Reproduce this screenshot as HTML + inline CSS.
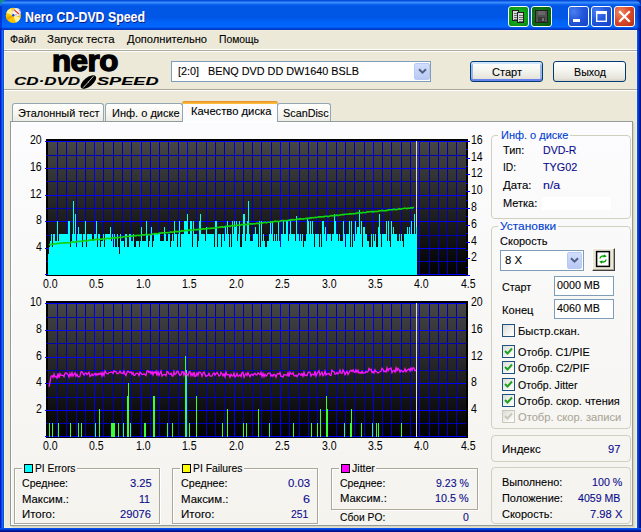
<!DOCTYPE html><html><head><meta charset="utf-8"><title>Nero CD-DVD Speed</title><style>
*{box-sizing:border-box;margin:0;padding:0}
html,body{width:641px;height:532px;overflow:hidden;background:#ECE9D8;}
body{position:relative;font-family:"Liberation Sans",sans-serif;font-size:11px;color:#000;}
.a{position:absolute;white-space:nowrap;}
.t{position:absolute;white-space:nowrap;line-height:14px;height:14px;font-size:11px;transform-origin:0 50%;-webkit-text-stroke:0.1px currentColor;}
.b{color:#0A0A8C;}
.g{color:#0040D0;}
.d{color:#ACA899;}
.title{left:0;top:0;width:641px;height:30px;background:linear-gradient(180deg,#0046D8 0,#0A52E0 1px,#338AFC 2px,#3B8EFF 3px,#1468F0 4px,#0057E6 6px,#0055E5 17px,#0060F4 21px,#0066FF 25px,#0066FF 27px,#0050E0 28px,#003CCC 29px,#0034C0 30px);border-radius:7px 7px 0 0;}
.cap{width:21px;height:21px;top:6px;border:1px solid #fff;border-radius:3px;background:radial-gradient(circle at 25% 25%,#4A80F0 0%,#2458DC 45%,#1440C4 100%);}
.capx{background:radial-gradient(circle at 28% 28%,#EE8C68 0%,#DE4C2A 45%,#B42E16 100%);}
.capg{background:radial-gradient(circle at 45% 45%,#20B828 0%,#10A018 60%,#088010 100%);border-color:#F0FFF0;}
.grp{border:1px solid #D0D0BF;border-radius:4px;}
.egr{border:1px solid #ACA899;box-shadow:1px 1px 0 #fff, inset 1px 1px 0 #fff;}
.btn{border:1px solid #003C74;border-radius:3px;background:linear-gradient(180deg,#FFFFFF 0%,#F3F3EE 50%,#E6E5DC 85%,#D6D0C5 100%);}
.inp{border:1px solid #7F9DB9;background:#fff;}
.cb{width:13px;height:13px;border:1px solid #1C5180;background:linear-gradient(135deg,#DCDCD7 0%,#F3F3F0 60%,#FFFFFF 100%);}
.tab{border:1px solid #91A7B4;border-bottom:none;border-radius:3px 3px 0 0;background:linear-gradient(180deg,#FFFFFF 0%,#F6F5EE 60%,#ECEBE6 100%);}
.ax{font-size:12px;-webkit-text-stroke:0;}
</style></head><body>
<div class="a" style="left:0;top:0;width:8px;height:8px;background:#178A8A"></div><div class="a" style="left:633px;top:0;width:8px;height:8px;background:#0A2FA8"></div>
<div class="a title"></div>
<div class="a" style="left:637px;top:6px;width:4px;height:24px;background:linear-gradient(90deg,rgba(0,40,180,0.25) 0,rgba(0,20,150,0.6) 50%,rgba(0,10,130,0.85) 100%)"></div>
<div class="a" style="left:0;top:6px;width:2px;height:24px;background:rgba(0,20,190,0.55)"></div>
<div class="a" style="left:4px;top:30px;width:633px;height:498px;border:1px solid #F6F0DA;border-top-color:#F3EEDC"></div>
<div class="a" style="left:0;top:30px;width:4px;height:502px;background:linear-gradient(90deg,#0019CF 0,#0019CF 1px,#0A48E4 1px,#0A48E4 2px,#166AEE 2px,#166AEE 3px,#0855DD 3px)"></div>
<div class="a" style="left:637px;top:30px;width:4px;height:502px;background:linear-gradient(90deg,#0A50E8 0,#0A50E8 1px,#0040D8 1px,#0040D8 2px,#001EA0 2px,#001EA0 3px,#00138C 3px)"></div>
<div class="a" style="left:0;top:528px;width:641px;height:4px;background:linear-gradient(180deg,#0A50E8 0,#0A50E8 1px,#0040D8 1px,#0040D8 2px,#001EA0 2px,#001EA0 3px,#00138C 3px)"></div>
<svg class="a" style="left:5px;top:7px" width="17" height="17" viewBox="0 0 17 17"><circle cx="8.4" cy="8.4" r="7.6" fill="#FFC400"/><path d="M8.4 8.4L1.2 6A7.6 7.6 0 0 1 6 1.2Z" fill="#FFEE90"/><path d="M8.4 8.4L15.6 10.8A7.6 7.6 0 0 1 10.8 15.6Z" fill="#FFF3A0"/><path d="M8.4 8.4L3 13.8A7.6 7.6 0 0 1 1 10Z" fill="#E8A800"/><circle cx="11.4" cy="5.2" r="4.3" fill="#E4E4E8"/><circle cx="11.4" cy="5.2" r="3" fill="#F8F8FA"/><path d="M8.8 2.6L14 7" stroke="#E83010" stroke-width="1.2"/><circle cx="11" cy="7.6" r="0.7" fill="#F05030"/><circle cx="14.3" cy="3.6" r="0.6" fill="#F07050"/><circle cx="8.3" cy="8.3" r="1.2" fill="#1050D8"/></svg>
<div class="t " id="t1" style="left:25px;top:11px;font-size:14px;transform:scaleX(0.8814);font-weight:bold;color:#fff;text-shadow:1px 1px #0A1883;line-height:16px;height:16px;margin-top:-2px">Nero CD-DVD Speed</div>
<div class="a cap capg" style="left:508px"><svg width="19" height="19" viewBox="0 0 19 19" shape-rendering="crispEdges"><rect x="3.5" y="3.5" width="6" height="10" fill="#D8D8D8" stroke="#202020" stroke-width="1"/><path d="M5 6h3M5 8h3M5 10h3M5 12h3" stroke="#707070" stroke-width="1"/><rect x="8.5" y="5.5" width="6" height="10" fill="#D8D8D8" stroke="#202020" stroke-width="1"/><path d="M10 8.5h4M10 10.5h4M10 12.5h4M10 14.5h4" stroke="#707070" stroke-width="1"/></svg></div>
<div class="a cap capg" style="left:531px;background:radial-gradient(circle at 40% 40%,#188A18 0%,#0A6A10 60%,#065008 100%)"><svg width="19" height="19" viewBox="0 0 19 19"><rect x="3.5" y="3.5" width="12" height="12" fill="#505050" stroke="#202020" stroke-width="1"/><rect x="6" y="4" width="7" height="4" fill="#686868"/><rect x="6" y="10" width="7" height="5" fill="#383838"/><rect x="10" y="11" width="2" height="3" fill="#707070"/></svg></div>
<div class="a cap" style="left:568px"><svg width="19" height="19" viewBox="0 0 19 19"><rect x="4" y="12" width="7" height="3" fill="#fff"/></svg></div>
<div class="a cap" style="left:591px"><svg width="19" height="19" viewBox="0 0 19 19"><rect x="4.7" y="5.5" width="9.6" height="8.8" fill="none" stroke="#fff" stroke-width="1.4"/><rect x="4" y="4" width="11" height="3" fill="#fff"/></svg></div>
<div class="a cap capx" style="left:614px"><svg width="19" height="19" viewBox="0 0 19 19"><path d="M5 5L14 14M14 5L5 14" stroke="#fff" stroke-width="2.2" stroke-linecap="square"/></svg></div>
<div class="t " id="t2" style="left:9.5px;top:32px;transform:scaleX(0.9613);">Файл</div>
<div class="t " id="t3" style="left:47px;top:32px;transform:scaleX(1.0380);">Запуск теста</div>
<div class="t " id="t4" style="left:126.5px;top:32px;transform:scaleX(1.0105);">Дополнительно</div>
<div class="t " id="t5" style="left:218.5px;top:32px;transform:scaleX(0.9412);">Помощь</div>
<div class="a" style="left:4px;top:49px;width:633px;height:3px;background:#fff"></div>
<div class="a" style="left:4px;top:50px;width:633px;height:1px;background:#ACA899"></div>
<div class="a" style="left:4px;top:89px;width:633px;height:1px;background:#ACA899"></div>
<div class="a" style="left:4px;top:90px;width:633px;height:1px;background:#fff"></div>
<div class="t " id="t6" style="left:51.9px;top:59.1px;font-size:30px;transform:scaleX(1.0442);font-weight:bold;letter-spacing:-0.5px;line-height:34px;height:34px;margin-top:-15.5px;-webkit-text-stroke:1.4px #000">nero</div>
<div class="t " id="t7" style="left:14px;top:74.7px;font-size:10px;transform:scaleX(1.6971);font-style:italic;font-weight:bold;">CD·DVD</div>
<div class="t " id="t8" style="left:97px;top:74.7px;font-size:10px;transform:scaleX(1.8138);font-style:italic;font-weight:bold;">SPEED</div>
<svg class="a" style="left:79px;top:73px" width="19" height="18" viewBox="0 0 19 18"><g transform="translate(9.4 9) rotate(-39)"><ellipse cx="0" cy="0" rx="9.3" ry="4.5" fill="#000"/><path d="M-7.5 1.1L-1.2 0.2M1.2 -0.2L7.5 -1.3" stroke="#ECE9D8" stroke-width="0.8" fill="none"/><ellipse cx="0" cy="0" rx="1.1" ry="0.6" fill="#D8D5C4"/></g></svg>
<div class="a inp" style="left:171px;top:61px;width:260px;height:21px"></div>
<div class="t " id="t9" style="left:178px;top:64.4px;transform:scaleX(0.9836);">[2:0]&nbsp;&nbsp; BENQ DVD DD DW1640 BSLB</div>
<div class="a" style="left:414px;top:63px;width:16px;height:17px;border:1px solid #B7CAF5;border-radius:2px;background:linear-gradient(180deg,#D2DEFC 0,#C6D3F7 50%,#B9C9F4 100%)"><svg class="a" style="left:0.5px;top:0" width="13" height="15" viewBox="0 0 13 15"><path d="M3 5.2L6.5 8.7L10 5.2" stroke="#4D6185" stroke-width="2" fill="none"/></svg></div>
<div class="a btn" style="left:470px;top:61px;width:73px;height:21px;box-shadow:inset 0 2px 0 #CEE7FF,inset 0 -2px 0 #6982EE,inset 2px 0 0 #98B8EA,inset -2px 0 0 #98B8EA"></div>
<div class="a btn" style="left:553px;top:61px;width:73px;height:21px"></div>
<div class="t " id="t10" style="left:491.5px;top:64.5px;transform:scaleX(1.0037);">Старт</div>
<div class="t " id="t11" style="left:573.5px;top:64.5px;transform:scaleX(0.9720);">Выход</div>
<div class="a" style="left:10px;top:121px;width:623px;height:405px;border:1px solid #919B9C;box-shadow:inset 1px 1px 0 #fff,1px 1px 0 #D9D5C0,2px 2px 0 #E3E0CC;background:linear-gradient(180deg,#FCFCFE 0,#F4F3EE 100%)"></div>
<div class="a tab" style="left:12px;top:103px;width:92px;height:18px"></div>
<div class="a tab" style="left:105px;top:103px;width:78px;height:18px"></div>
<div class="a tab" style="left:277px;top:103px;width:54px;height:18px"></div>
<div class="a tab" style="left:182px;top:101px;width:96px;height:21px;background:#FCFCFE;border-top:none"><div class="a" style="left:-1px;top:0;width:96px;height:3px;background:linear-gradient(180deg,#E68B2C 0,#FFC73C 100%);border-radius:3px 3px 0 0"></div></div>
<div class="t " id="t12" style="left:17.5px;top:105.8px;transform:scaleX(0.9898);">Эталонный тест</div>
<div class="t " id="t13" style="left:111.5px;top:105.8px;transform:scaleX(1.0024);">Инф. о диске</div>
<div class="t " id="t14" style="left:190.5px;top:103.8px;transform:scaleX(1.0201);">Качество диска</div>
<div class="t " id="t15" style="left:282.5px;top:105.8px;transform:scaleX(0.9835);">ScanDisc</div>
<svg class="a" style="left:0;top:0" width="641" height="532" viewBox="0 0 641 532" shape-rendering="crispEdges"><defs><linearGradient id="bg" x1="0" y1="0" x2="0" y2="1"><stop offset="0" stop-color="#464646"/><stop offset="1" stop-color="#000"/></linearGradient></defs><rect x="46" y="139" width="422" height="137" fill="#000"/><rect x="48" y="141" width="418" height="134" fill="url(#bg)"/><rect x="46" y="301" width="422" height="137" fill="#000"/><rect x="48" y="303" width="418" height="134" fill="url(#bg)"/><rect x="57" y="141" width="1" height="134" fill="#0000B4"/><rect x="66" y="141" width="1" height="134" fill="#0000B4"/><rect x="76" y="141" width="1" height="134" fill="#0000B4"/><rect x="85" y="141" width="1" height="134" fill="#0000B4"/><rect x="94" y="141" width="1" height="134" fill="#0000F0"/><rect x="103" y="141" width="1" height="134" fill="#0000B4"/><rect x="113" y="141" width="1" height="134" fill="#0000B4"/><rect x="122" y="141" width="1" height="134" fill="#0000B4"/><rect x="131" y="141" width="1" height="134" fill="#0000B4"/><rect x="141" y="141" width="1" height="134" fill="#0000F0"/><rect x="150" y="141" width="1" height="134" fill="#0000B4"/><rect x="159" y="141" width="1" height="134" fill="#0000B4"/><rect x="168" y="141" width="1" height="134" fill="#0000B4"/><rect x="178" y="141" width="1" height="134" fill="#0000B4"/><rect x="187" y="141" width="1" height="134" fill="#0000F0"/><rect x="196" y="141" width="1" height="134" fill="#0000B4"/><rect x="206" y="141" width="1" height="134" fill="#0000B4"/><rect x="215" y="141" width="1" height="134" fill="#0000B4"/><rect x="224" y="141" width="1" height="134" fill="#0000B4"/><rect x="234" y="141" width="1" height="134" fill="#0000F0"/><rect x="243" y="141" width="1" height="134" fill="#0000B4"/><rect x="252" y="141" width="1" height="134" fill="#0000B4"/><rect x="261" y="141" width="1" height="134" fill="#0000B4"/><rect x="271" y="141" width="1" height="134" fill="#0000B4"/><rect x="280" y="141" width="1" height="134" fill="#0000F0"/><rect x="289" y="141" width="1" height="134" fill="#0000B4"/><rect x="299" y="141" width="1" height="134" fill="#0000B4"/><rect x="308" y="141" width="1" height="134" fill="#0000B4"/><rect x="317" y="141" width="1" height="134" fill="#0000B4"/><rect x="326" y="141" width="1" height="134" fill="#0000F0"/><rect x="336" y="141" width="1" height="134" fill="#0000B4"/><rect x="345" y="141" width="1" height="134" fill="#0000B4"/><rect x="354" y="141" width="1" height="134" fill="#0000B4"/><rect x="364" y="141" width="1" height="134" fill="#0000B4"/><rect x="373" y="141" width="1" height="134" fill="#0000F0"/><rect x="382" y="141" width="1" height="134" fill="#0000B4"/><rect x="391" y="141" width="1" height="134" fill="#0000B4"/><rect x="401" y="141" width="1" height="134" fill="#0000B4"/><rect x="410" y="141" width="1" height="134" fill="#0000B4"/><rect x="419" y="141" width="1" height="134" fill="#0000F0"/><rect x="429" y="141" width="1" height="134" fill="#0000B4"/><rect x="438" y="141" width="1" height="134" fill="#0000B4"/><rect x="447" y="141" width="1" height="134" fill="#0000B4"/><rect x="456" y="141" width="1" height="134" fill="#0000B4"/><rect x="45" y="141" width="421" height="1" fill="#0000FF"/><rect x="46" y="155" width="420" height="1" fill="#0000B4"/><rect x="45" y="168" width="421" height="1" fill="#0000FF"/><rect x="46" y="181" width="420" height="1" fill="#0000B4"/><rect x="45" y="195" width="421" height="1" fill="#0000FF"/><rect x="46" y="208" width="420" height="1" fill="#0000B4"/><rect x="45" y="221" width="421" height="1" fill="#0000FF"/><rect x="46" y="235" width="420" height="1" fill="#0000B4"/><rect x="45" y="248" width="421" height="1" fill="#0000FF"/><rect x="46" y="261" width="420" height="1" fill="#0000B4"/><rect x="45" y="274" width="421" height="1" fill="#0000FF"/><rect x="466" y="141" width="4" height="1" fill="#0000FF"/><rect x="466" y="149" width="2" height="1" fill="#0000FF"/><rect x="466" y="158" width="4" height="1" fill="#0000FF"/><rect x="466" y="166" width="2" height="1" fill="#0000FF"/><rect x="466" y="174" width="4" height="1" fill="#0000FF"/><rect x="466" y="183" width="2" height="1" fill="#0000FF"/><rect x="466" y="191" width="4" height="1" fill="#0000FF"/><rect x="466" y="200" width="2" height="1" fill="#0000FF"/><rect x="466" y="208" width="4" height="1" fill="#0000FF"/><rect x="466" y="216" width="2" height="1" fill="#0000FF"/><rect x="466" y="225" width="4" height="1" fill="#0000FF"/><rect x="466" y="233" width="2" height="1" fill="#0000FF"/><rect x="466" y="242" width="4" height="1" fill="#0000FF"/><rect x="466" y="250" width="2" height="1" fill="#0000FF"/><rect x="466" y="258" width="4" height="1" fill="#0000FF"/><rect x="466" y="267" width="2" height="1" fill="#0000FF"/><rect x="466" y="275" width="4" height="1" fill="#0000FF"/><rect x="57" y="303" width="1" height="134" fill="#0000B4"/><rect x="66" y="303" width="1" height="134" fill="#0000B4"/><rect x="76" y="303" width="1" height="134" fill="#0000B4"/><rect x="85" y="303" width="1" height="134" fill="#0000B4"/><rect x="94" y="303" width="1" height="134" fill="#0000F0"/><rect x="103" y="303" width="1" height="134" fill="#0000B4"/><rect x="113" y="303" width="1" height="134" fill="#0000B4"/><rect x="122" y="303" width="1" height="134" fill="#0000B4"/><rect x="131" y="303" width="1" height="134" fill="#0000B4"/><rect x="141" y="303" width="1" height="134" fill="#0000F0"/><rect x="150" y="303" width="1" height="134" fill="#0000B4"/><rect x="159" y="303" width="1" height="134" fill="#0000B4"/><rect x="168" y="303" width="1" height="134" fill="#0000B4"/><rect x="178" y="303" width="1" height="134" fill="#0000B4"/><rect x="187" y="303" width="1" height="134" fill="#0000F0"/><rect x="196" y="303" width="1" height="134" fill="#0000B4"/><rect x="206" y="303" width="1" height="134" fill="#0000B4"/><rect x="215" y="303" width="1" height="134" fill="#0000B4"/><rect x="224" y="303" width="1" height="134" fill="#0000B4"/><rect x="234" y="303" width="1" height="134" fill="#0000F0"/><rect x="243" y="303" width="1" height="134" fill="#0000B4"/><rect x="252" y="303" width="1" height="134" fill="#0000B4"/><rect x="261" y="303" width="1" height="134" fill="#0000B4"/><rect x="271" y="303" width="1" height="134" fill="#0000B4"/><rect x="280" y="303" width="1" height="134" fill="#0000F0"/><rect x="289" y="303" width="1" height="134" fill="#0000B4"/><rect x="299" y="303" width="1" height="134" fill="#0000B4"/><rect x="308" y="303" width="1" height="134" fill="#0000B4"/><rect x="317" y="303" width="1" height="134" fill="#0000B4"/><rect x="326" y="303" width="1" height="134" fill="#0000F0"/><rect x="336" y="303" width="1" height="134" fill="#0000B4"/><rect x="345" y="303" width="1" height="134" fill="#0000B4"/><rect x="354" y="303" width="1" height="134" fill="#0000B4"/><rect x="364" y="303" width="1" height="134" fill="#0000B4"/><rect x="373" y="303" width="1" height="134" fill="#0000F0"/><rect x="382" y="303" width="1" height="134" fill="#0000B4"/><rect x="391" y="303" width="1" height="134" fill="#0000B4"/><rect x="401" y="303" width="1" height="134" fill="#0000B4"/><rect x="410" y="303" width="1" height="134" fill="#0000B4"/><rect x="419" y="303" width="1" height="134" fill="#0000F0"/><rect x="429" y="303" width="1" height="134" fill="#0000B4"/><rect x="438" y="303" width="1" height="134" fill="#0000B4"/><rect x="447" y="303" width="1" height="134" fill="#0000B4"/><rect x="456" y="303" width="1" height="134" fill="#0000B4"/><rect x="45" y="303" width="421" height="1" fill="#0000FF"/><rect x="46" y="317" width="420" height="1" fill="#0000B4"/><rect x="45" y="330" width="421" height="1" fill="#0000FF"/><rect x="46" y="343" width="420" height="1" fill="#0000B4"/><rect x="45" y="357" width="421" height="1" fill="#0000FF"/><rect x="46" y="370" width="420" height="1" fill="#0000B4"/><rect x="45" y="383" width="421" height="1" fill="#0000FF"/><rect x="46" y="397" width="420" height="1" fill="#0000B4"/><rect x="45" y="410" width="421" height="1" fill="#0000FF"/><rect x="46" y="423" width="420" height="1" fill="#0000B4"/><rect x="45" y="436" width="421" height="1" fill="#0000FF"/><rect x="416" y="141" width="1" height="134" fill="#D8D8E4"/><path d="M48 275L48 254.1L49 254.1L49 247.4L50 247.4L50 240.8L51 240.8L51 234.1L52 234.1L52 247.4L53 247.4L53 234.1L54 234.1L54 234.1L55 234.1L55 240.8L56 240.8L56 240.8L57 240.8L57 220.8L58 220.8L58 240.8L59 240.8L59 234.1L60 234.1L60 234.1L61 234.1L61 234.1L62 234.1L62 234.1L63 234.1L63 234.1L64 234.1L64 234.1L65 234.1L65 234.1L66 234.1L66 234.1L67 234.1L67 234.1L68 234.1L68 220.8L69 220.8L69 220.8L70 220.8L70 247.4L71 247.4L71 240.8L72 240.8L72 234.1L73 234.1L73 200.8L74 200.8L74 234.1L75 234.1L75 214.2L76 214.2L76 247.4L77 247.4L77 234.1L78 234.1L78 227.4L79 227.4L79 234.1L80 234.1L80 234.1L81 234.1L81 234.1L82 234.1L82 247.4L83 247.4L83 234.1L84 234.1L84 234.1L85 234.1L85 220.8L86 220.8L86 247.4L87 247.4L87 234.1L88 234.1L88 234.1L89 234.1L89 234.1L90 234.1L90 234.1L91 234.1L91 234.1L92 234.1L92 240.8L93 240.8L93 240.8L94 240.8L94 234.1L95 234.1L95 234.1L96 234.1L96 220.8L97 220.8L97 247.4L98 247.4L98 234.1L99 234.1L99 234.1L100 234.1L100 247.4L101 247.4L101 240.8L102 240.8L102 240.8L103 240.8L103 234.1L104 234.1L104 247.4L105 247.4L105 234.1L106 234.1L106 234.1L107 234.1L107 234.1L108 234.1L108 234.1L109 234.1L109 234.1L110 234.1L110 227.4L111 227.4L111 240.8L112 240.8L112 234.1L113 234.1L113 247.4L114 247.4L114 234.1L115 234.1L115 247.4L116 247.4L116 247.4L117 247.4L117 234.1L118 234.1L118 247.4L119 247.4L119 254.1L120 254.1L120 234.1L121 234.1L121 240.8L122 240.8L122 240.8L123 240.8L123 240.8L124 240.8L124 247.4L125 247.4L125 234.1L126 234.1L126 234.1L127 234.1L127 247.4L128 247.4L128 247.4L129 247.4L129 234.1L130 234.1L130 234.1L131 234.1L131 240.8L132 240.8L132 240.8L133 240.8L133 234.1L134 234.1L134 247.4L135 247.4L135 247.4L136 247.4L136 240.8L137 240.8L137 240.8L138 240.8L138 240.8L139 240.8L139 247.4L140 247.4L140 240.8L141 240.8L141 227.4L142 227.4L142 240.8L143 240.8L143 240.8L144 240.8L144 240.8L145 240.8L145 240.8L146 240.8L146 220.8L147 220.8L147 234.1L148 234.1L148 247.4L149 247.4L149 240.8L150 240.8L150 234.1L151 234.1L151 227.4L152 227.4L152 247.4L153 247.4L153 240.8L154 240.8L154 234.1L155 234.1L155 234.1L156 234.1L156 234.1L157 234.1L157 234.1L158 234.1L158 234.1L159 234.1L159 234.1L160 234.1L160 240.8L161 240.8L161 240.8L162 240.8L162 240.8L163 240.8L163 240.8L164 240.8L164 227.4L165 227.4L165 234.1L166 234.1L166 240.8L167 240.8L167 240.8L168 240.8L168 234.1L169 234.1L169 234.1L170 234.1L170 247.4L171 247.4L171 240.8L172 240.8L172 234.1L173 234.1L173 240.8L174 240.8L174 220.8L175 220.8L175 234.1L176 234.1L176 234.1L177 234.1L177 247.4L178 247.4L178 234.1L179 234.1L179 220.8L180 220.8L180 247.4L181 247.4L181 234.1L182 234.1L182 234.1L183 234.1L183 234.1L184 234.1L184 220.8L185 220.8L185 220.8L186 220.8L186 220.8L187 220.8L187 214.2L188 214.2L188 234.1L189 234.1L189 234.1L190 234.1L190 220.8L191 220.8L191 220.8L192 220.8L192 247.4L193 247.4L193 220.8L194 220.8L194 234.1L195 234.1L195 234.1L196 234.1L196 234.1L197 234.1L197 247.4L198 247.4L198 240.8L199 240.8L199 220.8L200 220.8L200 214.2L201 214.2L201 234.1L202 234.1L202 234.1L203 234.1L203 234.1L204 234.1L204 234.1L205 234.1L205 240.8L206 240.8L206 227.4L207 227.4L207 234.1L208 234.1L208 234.1L209 234.1L209 234.1L210 234.1L210 234.1L211 234.1L211 234.1L212 234.1L212 234.1L213 234.1L213 234.1L214 234.1L214 247.4L215 247.4L215 220.8L216 220.8L216 220.8L217 220.8L217 247.4L218 247.4L218 234.1L219 234.1L219 234.1L220 234.1L220 234.1L221 234.1L221 247.4L222 247.4L222 234.1L223 234.1L223 234.1L224 234.1L224 240.8L225 240.8L225 227.4L226 227.4L226 234.1L227 234.1L227 220.8L228 220.8L228 234.1L229 234.1L229 247.4L230 247.4L230 234.1L231 234.1L231 247.4L232 247.4L232 220.8L233 220.8L233 234.1L234 234.1L234 220.8L235 220.8L235 227.4L236 227.4L236 220.8L237 220.8L237 240.8L238 240.8L238 234.1L239 234.1L239 220.8L240 220.8L240 247.4L241 247.4L241 247.4L242 247.4L242 234.1L243 234.1L243 214.2L244 214.2L244 214.2L245 214.2L245 240.8L246 240.8L246 234.1L247 234.1L247 220.8L248 220.8L248 200.8L249 200.8L249 234.1L250 234.1L250 240.8L251 240.8L251 240.8L252 240.8L252 240.8L253 240.8L253 234.1L254 234.1L254 234.1L255 234.1L255 227.4L256 227.4L256 234.1L257 234.1L257 234.1L258 234.1L258 247.4L259 247.4L259 220.8L260 220.8L260 247.4L261 247.4L261 220.8L262 220.8L262 240.8L263 240.8L263 234.1L264 234.1L264 240.8L265 240.8L265 247.4L266 247.4L266 247.4L267 247.4L267 240.8L268 240.8L268 240.8L269 240.8L269 234.1L270 234.1L270 220.8L271 220.8L271 234.1L272 234.1L272 220.8L273 220.8L273 240.8L274 240.8L274 234.1L275 234.1L275 240.8L276 240.8L276 234.1L277 234.1L277 240.8L278 240.8L278 220.8L279 220.8L279 240.8L280 240.8L280 247.4L281 247.4L281 234.1L282 234.1L282 234.1L283 234.1L283 220.8L284 220.8L284 234.1L285 234.1L285 234.1L286 234.1L286 220.8L287 220.8L287 220.8L288 220.8L288 240.8L289 240.8L289 234.1L290 234.1L290 220.8L291 220.8L291 234.1L292 234.1L292 234.1L293 234.1L293 234.1L294 234.1L294 234.1L295 234.1L295 240.8L296 240.8L296 216.1L297 216.1L297 234.1L298 234.1L298 234.1L299 234.1L299 240.8L300 240.8L300 234.1L301 234.1L301 240.8L302 240.8L302 234.1L303 234.1L303 247.4L304 247.4L304 240.8L305 240.8L305 240.8L306 240.8L306 234.1L307 234.1L307 217.5L308 217.5L308 220.8L309 220.8L309 234.1L310 234.1L310 220.8L311 220.8L311 234.1L312 234.1L312 220.8L313 220.8L313 234.1L314 234.1L314 247.4L315 247.4L315 234.1L316 234.1L316 234.1L317 234.1L317 234.1L318 234.1L318 234.1L319 234.1L319 247.4L320 247.4L320 234.1L321 234.1L321 247.4L322 247.4L322 220.8L323 220.8L323 220.8L324 220.8L324 234.1L325 234.1L325 227.4L326 227.4L326 240.8L327 240.8L327 234.1L328 234.1L328 234.1L329 234.1L329 234.1L330 234.1L330 234.1L331 234.1L331 240.8L332 240.8L332 234.1L333 234.1L333 234.1L334 234.1L334 214.2L335 214.2L335 220.8L336 220.8L336 234.1L337 234.1L337 234.1L338 234.1L338 240.8L339 240.8L339 234.1L340 234.1L340 240.8L341 240.8L341 240.8L342 240.8L342 240.8L343 240.8L343 220.8L344 220.8L344 234.1L345 234.1L345 247.4L346 247.4L346 234.1L347 234.1L347 234.1L348 234.1L348 234.1L349 234.1L349 220.8L350 220.8L350 247.4L351 247.4L351 220.8L352 220.8L352 247.4L353 247.4L353 234.1L354 234.1L354 240.8L355 240.8L355 220.8L356 220.8L356 234.1L357 234.1L357 227.4L358 227.4L358 227.4L359 227.4L359 209.5L360 209.5L360 234.1L361 234.1L361 220.8L362 220.8L362 247.4L363 247.4L363 227.4L364 227.4L364 227.4L365 227.4L365 234.1L366 234.1L366 234.1L367 234.1L367 240.8L368 240.8L368 240.8L369 240.8L369 247.4L370 247.4L370 247.4L371 247.4L371 234.1L372 234.1L372 247.4L373 247.4L373 234.1L374 234.1L374 240.8L375 240.8L375 234.1L376 234.1L376 247.4L377 247.4L377 247.4L378 247.4L378 227.4L379 227.4L379 214.2L380 214.2L380 234.1L381 234.1L381 247.4L382 247.4L382 234.1L383 234.1L383 234.1L384 234.1L384 234.1L385 234.1L385 234.1L386 234.1L386 220.8L387 220.8L387 240.8L388 240.8L388 220.8L389 220.8L389 240.8L390 240.8L390 247.4L391 247.4L391 220.8L392 220.8L392 234.1L393 234.1L393 227.4L394 227.4L394 234.1L395 234.1L395 234.1L396 234.1L396 234.1L397 234.1L397 240.8L398 240.8L398 240.8L399 240.8L399 234.1L400 234.1L400 240.8L401 240.8L401 234.1L402 234.1L402 240.8L403 240.8L403 247.4L404 247.4L404 234.1L405 234.1L405 234.1L406 234.1L406 234.1L407 234.1L407 227.4L408 227.4L408 234.1L409 234.1L409 227.4L410 227.4L410 234.1L411 234.1L411 220.8L412 220.8L412 234.1L413 234.1L413 234.1L414 234.1L414 214.2L415 214.2L415 234.1L416 234.1L416 227.4L417 227.4L417 275Z" fill="#00FFFF"/><rect x="49" y="422.7" width="1" height="14.3" fill="#38FF38"/><rect x="52" y="422.7" width="1" height="14.3" fill="#38FF38"/><rect x="58" y="422.7" width="1" height="14.3" fill="#38FF38"/><rect x="70" y="422.7" width="1" height="14.3" fill="#38FF38"/><rect x="78" y="422.7" width="1" height="14.3" fill="#38FF38"/><rect x="81" y="422.7" width="1" height="14.3" fill="#38FF38"/><rect x="95" y="422.7" width="1" height="14.3" fill="#38FF38"/><rect x="99" y="409.4" width="1" height="27.6" fill="#38FF38"/><rect x="111" y="422.7" width="1" height="14.3" fill="#38FF38"/><rect x="112" y="422.7" width="1" height="14.3" fill="#38FF38"/><rect x="113" y="422.7" width="1" height="14.3" fill="#38FF38"/><rect x="114" y="422.7" width="1" height="14.3" fill="#38FF38"/><rect x="118" y="422.7" width="1" height="14.3" fill="#38FF38"/><rect x="123" y="422.7" width="1" height="14.3" fill="#38FF38"/><rect x="127" y="396.1" width="1" height="40.9" fill="#38FF38"/><rect x="128" y="382.8" width="1" height="54.2" fill="#38FF38"/><rect x="130" y="422.7" width="1" height="14.3" fill="#38FF38"/><rect x="144" y="422.7" width="1" height="14.3" fill="#38FF38"/><rect x="145" y="422.7" width="1" height="14.3" fill="#38FF38"/><rect x="153" y="396.1" width="1" height="40.9" fill="#38FF38"/><rect x="154" y="396.1" width="1" height="40.9" fill="#38FF38"/><rect x="167" y="422.7" width="1" height="14.3" fill="#38FF38"/><rect x="172" y="422.7" width="1" height="14.3" fill="#38FF38"/><rect x="185" y="356.2" width="1" height="80.8" fill="#38FF38"/><rect x="186" y="369.5" width="1" height="67.5" fill="#38FF38"/><rect x="189" y="422.7" width="1" height="14.3" fill="#38FF38"/><rect x="196" y="396.1" width="1" height="40.9" fill="#38FF38"/><rect x="222" y="422.7" width="1" height="14.3" fill="#38FF38"/><rect x="227" y="409.4" width="1" height="27.6" fill="#38FF38"/><rect x="243" y="422.7" width="1" height="14.3" fill="#38FF38"/><rect x="246" y="422.7" width="1" height="14.3" fill="#38FF38"/><rect x="258" y="409.4" width="1" height="27.6" fill="#38FF38"/><rect x="269" y="422.7" width="1" height="14.3" fill="#38FF38"/><rect x="293" y="422.7" width="1" height="14.3" fill="#38FF38"/><rect x="311" y="422.7" width="1" height="14.3" fill="#38FF38"/><rect x="317" y="422.7" width="1" height="14.3" fill="#38FF38"/><rect x="320" y="409.4" width="1" height="27.6" fill="#38FF38"/><rect x="326" y="396.1" width="1" height="40.9" fill="#38FF38"/><rect x="327" y="409.4" width="1" height="27.6" fill="#38FF38"/><rect x="344" y="422.7" width="1" height="14.3" fill="#38FF38"/><rect x="350" y="422.7" width="1" height="14.3" fill="#38FF38"/><rect x="351" y="409.4" width="1" height="27.6" fill="#38FF38"/><rect x="361" y="422.7" width="1" height="14.3" fill="#38FF38"/><rect x="372" y="422.7" width="1" height="14.3" fill="#38FF38"/><rect x="376" y="422.7" width="1" height="14.3" fill="#38FF38"/><rect x="378" y="422.7" width="1" height="14.3" fill="#38FF38"/><rect x="401" y="422.7" width="1" height="14.3" fill="#38FF38"/><path d="M49 244.7L50 244.4L51 244.7L52 244.4L53 244.2L54 243.7L55 244.0L56 243.8L57 243.5L58 243.2L59 243.5L60 243.1L61 243.2L62 243.3L63 243.0L64 242.8L65 242.9L66 242.7L67 242.9L68 242.6L69 242.9L70 242.7L71 242.5L72 242.0L73 241.8L74 242.3L75 242.1L76 241.9L77 241.5L78 241.4L79 241.6L80 241.4L81 241.3L82 241.3L83 241.3L84 240.7L85 240.6L86 241.1L87 241.0L88 240.8L89 240.1L90 240.0L91 240.1L92 240.1L93 240.1L94 239.6L95 239.9L96 239.4L97 239.3L98 239.7L99 239.5L100 239.4L101 239.1L102 239.1L103 238.8L104 238.8L105 239.0L106 239.0L107 238.3L108 238.2L109 238.7L110 238.4L111 238.4L112 237.9L113 238.0L114 237.7L115 238.1L116 237.6L117 237.7L118 237.9L119 237.3L120 237.3L121 237.4L122 237.4L123 236.9L124 236.8L125 236.5L126 237.0L127 236.3L128 236.2L129 236.4L130 236.3L131 236.3L132 235.9L133 236.2L134 235.5L135 235.6L136 235.8L137 235.2L138 235.3L139 235.6L140 235.4L141 235.0L142 234.8L143 234.9L144 235.1L145 234.7L146 234.4L147 234.7L148 234.5L149 234.7L150 234.6L151 234.5L152 234.0L153 234.2L154 233.7L155 233.6L156 233.6L157 233.9L158 233.8L159 233.1L160 233.1L161 233.0L162 232.9L163 232.9L164 232.8L165 232.5L166 232.7L167 232.8L168 232.5L169 232.6L170 232.3L171 231.9L172 232.2L173 232.2L174 231.7L175 231.3L176 231.6L177 231.6L178 231.5L179 231.7L180 231.3L181 231.4L182 230.7L183 231.0L184 231.0L185 230.4L186 230.3L187 230.7L188 230.7L189 230.0L190 230.3L191 229.8L192 230.2L193 230.0L194 229.6L195 229.5L196 229.8L197 229.5L198 229.6L199 229.2L200 229.1L201 229.5L202 229.1L203 228.9L204 228.8L205 228.9L206 228.8L207 228.8L208 228.3L209 228.5L210 228.3L211 228.4L212 228.2L213 228.1L214 228.1L215 228.0L216 227.7L217 227.5L218 227.5L219 227.5L220 227.1L221 227.0L222 226.7L223 227.1L224 227.2L225 226.6L226 226.3L227 226.2L228 226.3L229 226.1L230 226.5L231 225.7L232 225.8L233 225.5L234 225.9L235 225.9L236 225.3L237 225.1L238 225.3L239 225.3L240 225.5L241 224.7L242 224.6L243 224.6L244 224.5L245 224.4L246 224.7L247 224.5L248 224.1L249 224.0L250 223.9L251 223.8L252 224.1L253 223.7L254 223.8L255 223.9L256 223.5L257 223.2L258 223.6L259 223.5L260 223.0L261 223.0L262 223.3L263 222.8L264 222.5L265 222.2L266 222.9L267 222.6L268 222.2L269 222.2L270 222.1L271 221.8L272 222.3L273 221.9L274 221.5L275 221.2L276 221.5L277 221.3L278 221.5L279 221.4L280 221.2L281 220.7L282 220.6L283 220.6L284 220.5L285 220.9L286 220.5L287 220.5L288 220.7L289 220.0L290 220.1L291 219.7L292 220.1L293 219.4L294 219.9L295 219.8L296 219.7L297 219.0L298 219.1L299 219.3L300 218.7L301 218.9L302 218.8L303 219.1L304 218.7L305 218.8L306 218.3L307 218.6L308 218.2L309 218.5L310 217.7L311 218.2L312 217.6L313 217.8L314 217.7L315 217.3L316 217.7L317 217.2L318 217.1L319 216.8L320 216.9L321 216.9L322 217.0L323 216.6L324 216.8L325 216.2L326 216.3L327 216.3L328 216.6L329 216.4L330 216.1L331 215.5L332 215.7L333 215.9L334 215.4L335 215.6L336 215.4L337 214.9L338 215.6L339 215.3L340 214.8L341 215.0L342 214.6L343 214.6L344 214.6L345 214.3L346 214.3L347 214.2L348 214.3L349 213.9L350 213.7L351 214.1L352 213.6L353 214.0L354 213.6L355 213.7L356 213.2L357 213.5L358 212.9L359 212.8L360 212.6L361 213.0L362 212.9L363 212.4L364 212.5L365 212.7L366 212.4L367 211.9L368 211.9L369 211.8L370 211.7L371 211.8L372 211.4L373 212.0L374 211.5L375 211.5L376 211.5L377 211.5L378 211.4L379 211.0L380 210.8L381 210.8L382 210.4L383 210.6L384 210.7L385 210.8L386 210.6L387 210.4L388 210.2L389 209.6L390 209.8L391 209.7L392 209.9L393 209.3L394 209.4L395 209.4L396 209.6L397 209.5L398 209.2L399 208.7L400 209.1L401 209.1L402 208.8L403 208.5L404 208.5L405 208.1L406 208.5L407 208.6L408 208.1L409 208.2L410 208.2L411 207.6L412 208.1L413 207.7L414 207.3" stroke="#10D410" stroke-width="1.6" fill="none" shape-rendering="auto"/><path d="M49 386.8L50 382.1L51 376.3L52 375.6L53 377.4L54 374.1L55 377.0L56 376.4L57 378.1L58 373.5L59 377.8L60 373.6L61 375.5L62 375.3L63 375.2L64 376.7L65 373.2L66 372.7L67 373.5L68 374.6L69 377.1L70 373.3L71 376.1L72 372.7L73 376.2L74 374.3L75 372.9L76 376.3L77 374.3L78 376.7L79 376.9L80 376.1L81 371.7L82 371.9L83 373.4L84 375.2L85 373.2L86 372.8L87 374.7L88 373.5L89 372.4L90 376.5L91 375.5L92 374.0L93 375.7L94 374.4L95 373.4L96 375.4L97 373.6L98 374.9L99 373.3L100 374.5L101 372.8L102 376.0L103 372.6L104 375.4L105 371.0L106 372.9L107 373.6L108 373.9L109 372.7L110 372.4L111 372.0L112 372.0L113 373.4L114 370.7L115 371.5L116 371.4L117 373.7L118 373.6L119 372.9L120 371.1L121 373.1L122 373.1L123 373.6L124 371.1L125 374.2L126 375.6L127 372.0L128 371.1L129 371.9L130 372.7L131 371.8L132 374.2L133 372.7L134 375.5L135 375.2L136 373.5L137 373.2L138 373.7L139 375.6L140 372.2L141 373.1L142 374.6L143 374.3L144 373.8L145 374.6L146 375.5L147 371.1L148 370.8L149 372.4L150 371.3L151 373.7L152 371.7L153 374.8L154 372.0L155 373.0L156 371.2L157 375.5L158 371.8L159 375.4L160 373.2L161 371.0L162 376.1L163 374.8L164 374.6L165 374.4L166 375.8L167 371.4L168 371.9L169 374.1L170 374.4L171 373.2L172 376.0L173 376.1L174 371.5L175 374.7L176 373.7L177 371.4L178 371.2L179 373.9L180 375.4L181 374.9L182 371.6L183 371.7L184 375.5L185 372.1L186 374.7L187 374.1L188 375.7L189 372.0L190 371.4L191 375.6L192 373.3L193 375.7L194 372.1L195 376.5L196 376.2L197 373.0L198 375.2L199 372.1L200 372.3L201 373.1L202 376.2L203 373.2L204 372.0L205 374.6L206 376.6L207 375.8L208 375.4L209 373.3L210 376.0L211 376.1L212 375.9L213 373.6L214 372.9L215 375.2L216 373.7L217 372.5L218 374.1L219 376.0L220 375.6L221 372.3L222 373.7L223 375.8L224 373.9L225 376.8L226 372.1L227 375.0L228 374.6L229 374.6L230 377.1L231 374.2L232 375.9L233 376.1L234 373.2L235 377.0L236 375.9L237 373.4L238 376.2L239 376.0L240 374.6L241 376.5L242 372.7L243 372.2L244 377.3L245 375.0L246 373.5L247 375.5L248 372.6L249 374.9L250 376.6L251 374.6L252 374.1L253 375.6L254 374.0L255 373.3L256 374.8L257 374.8L258 373.0L259 373.8L260 374.7L261 372.4L262 376.5L263 373.3L264 376.6L265 374.2L266 376.2L267 375.1L268 373.3L269 373.2L270 373.2L271 376.1L272 374.8L273 376.2L274 374.3L275 374.7L276 377.1L277 374.1L278 373.5L279 374.2L280 372.6L281 376.3L282 376.4L283 377.1L284 374.5L285 374.8L286 374.8L287 375.7L288 372.8L289 376.7L290 372.2L291 374.0L292 374.1L293 372.7L294 375.7L295 376.1L296 375.2L297 376.6L298 375.1L299 373.5L300 373.9L301 375.3L302 373.6L303 376.2L304 372.3L305 375.7L306 375.2L307 375.7L308 372.8L309 372.0L310 372.2L311 376.1L312 374.2L313 374.4L314 375.1L315 371.1L316 376.0L317 373.5L318 372.1L319 370.8L320 375.3L321 373.6L322 372.0L323 375.7L324 374.6L325 371.1L326 375.0L327 373.7L328 374.1L329 373.4L330 375.2L331 375.4L332 370.2L333 371.4L334 371.5L335 374.2L336 374.0L337 372.4L338 374.0L339 372.8L340 370.2L341 373.2L342 373.3L343 369.8L344 371.7L345 374.7L346 372.7L347 371.4L348 374.5L349 372.9L350 371.0L351 370.1L352 371.5L353 369.8L354 372.1L355 372.4L356 369.9L357 372.3L358 370.2L359 373.1L360 372.4L361 373.2L362 371.2L363 373.2L364 372.9L365 372.8L366 371.4L367 372.2L368 371.5L369 368.5L370 370.1L371 369.1L372 372.5L373 371.5L374 373.1L375 369.8L376 371.5L377 371.9L378 373.2L379 372.3L380 371.8L381 371.1L382 368.2L383 369.3L384 371.6L385 371.1L386 372.1L387 367.9L388 370.9L389 368.7L390 368.9L391 367.9L392 372.5L393 370.9L394 370.5L395 372.1L396 367.8L397 370.7L398 368.3L399 369.5L400 372.0L401 370.1L402 370.9L403 371.9L404 371.3L405 368.8L406 371.8L407 370.3L408 369.6L409 368.9L410 371.0L411 368.0L412 370.3L413 367.8L414 368.0L415 370.7L416 370.4" stroke="#FF18FF" stroke-width="1.25" fill="none" shape-rendering="auto"/><rect x="416" y="303" width="1" height="134" fill="#DCDCE8"/></svg>
<div class="t ax" id="t16" style="left:29.9608px;top:133px;transform:scaleX(0.88);">20</div>
<div class="t ax" id="t17" style="left:29.9608px;top:160px;transform:scaleX(0.88);">16</div>
<div class="t ax" id="t18" style="left:29.9608px;top:187px;transform:scaleX(0.88);">12</div>
<div class="t ax" id="t19" style="left:35.8304px;top:213px;transform:scaleX(0.88);">8</div>
<div class="t ax" id="t20" style="left:35.8304px;top:240px;transform:scaleX(0.88);">4</div>
<div class="t ax" id="t21" style="left:470.7px;top:133px;transform:scaleX(0.88);">16</div>
<div class="t ax" id="t22" style="left:470.7px;top:150px;transform:scaleX(0.88);">14</div>
<div class="t ax" id="t23" style="left:470.7px;top:166px;transform:scaleX(0.88);">12</div>
<div class="t ax" id="t24" style="left:470.7px;top:183px;transform:scaleX(0.88);">10</div>
<div class="t ax" id="t25" style="left:470.7px;top:200px;transform:scaleX(0.88);">8</div>
<div class="t ax" id="t26" style="left:470.7px;top:217px;transform:scaleX(0.88);">6</div>
<div class="t ax" id="t27" style="left:470.7px;top:234px;transform:scaleX(0.88);">4</div>
<div class="t ax" id="t28" style="left:470.7px;top:250px;transform:scaleX(0.88);">2</div>
<div class="t ax" id="t29" style="left:42.852px;top:277px;transform:scaleX(0.88);">0.0</div>
<div class="t ax" id="t30" style="left:89.302px;top:277px;transform:scaleX(0.88);">0.5</div>
<div class="t ax" id="t31" style="left:135.752px;top:277px;transform:scaleX(0.88);">1.0</div>
<div class="t ax" id="t32" style="left:182.202px;top:277px;transform:scaleX(0.88);">1.5</div>
<div class="t ax" id="t33" style="left:228.652px;top:277px;transform:scaleX(0.88);">2.0</div>
<div class="t ax" id="t34" style="left:275.102px;top:277px;transform:scaleX(0.88);">2.5</div>
<div class="t ax" id="t35" style="left:321.552px;top:277px;transform:scaleX(0.88);">3.0</div>
<div class="t ax" id="t36" style="left:368.002px;top:277px;transform:scaleX(0.88);">3.5</div>
<div class="t ax" id="t37" style="left:414.452px;top:277px;transform:scaleX(0.88);">4.0</div>
<div class="t ax" id="t38" style="left:460.902px;top:277px;transform:scaleX(0.88);">4.5</div>
<div class="t ax" id="t39" style="left:29.9608px;top:295px;transform:scaleX(0.88);">10</div>
<div class="t ax" id="t40" style="left:35.8304px;top:322px;transform:scaleX(0.88);">8</div>
<div class="t ax" id="t41" style="left:35.8304px;top:349px;transform:scaleX(0.88);">6</div>
<div class="t ax" id="t42" style="left:35.8304px;top:375px;transform:scaleX(0.88);">4</div>
<div class="t ax" id="t43" style="left:35.8304px;top:402px;transform:scaleX(0.88);">2</div>
<div class="t ax" id="t44" style="left:470.7px;top:295px;transform:scaleX(0.88);">20</div>
<div class="t ax" id="t45" style="left:470.7px;top:322px;transform:scaleX(0.88);">16</div>
<div class="t ax" id="t46" style="left:470.7px;top:349px;transform:scaleX(0.88);">12</div>
<div class="t ax" id="t47" style="left:470.7px;top:375px;transform:scaleX(0.88);">8</div>
<div class="t ax" id="t48" style="left:470.7px;top:402px;transform:scaleX(0.88);">4</div>
<div class="t ax" id="t49" style="left:42.852px;top:439px;transform:scaleX(0.88);">0.0</div>
<div class="t ax" id="t50" style="left:89.302px;top:439px;transform:scaleX(0.88);">0.5</div>
<div class="t ax" id="t51" style="left:135.752px;top:439px;transform:scaleX(0.88);">1.0</div>
<div class="t ax" id="t52" style="left:182.202px;top:439px;transform:scaleX(0.88);">1.5</div>
<div class="t ax" id="t53" style="left:228.652px;top:439px;transform:scaleX(0.88);">2.0</div>
<div class="t ax" id="t54" style="left:275.102px;top:439px;transform:scaleX(0.88);">2.5</div>
<div class="t ax" id="t55" style="left:321.552px;top:439px;transform:scaleX(0.88);">3.0</div>
<div class="t ax" id="t56" style="left:368.002px;top:439px;transform:scaleX(0.88);">3.5</div>
<div class="t ax" id="t57" style="left:414.452px;top:439px;transform:scaleX(0.88);">4.0</div>
<div class="t ax" id="t58" style="left:460.902px;top:439px;transform:scaleX(0.88);">4.5</div>
<div class="a grp" style="left:491px;top:135px;width:140px;height:84px"></div>
<div class="a" style="left:498px;top:130px;width:72px;height:10px;background:#FBFBFC"></div>
<div class="t g" id="t59" style="left:500.5px;top:127.5px;transform:scaleX(0.9980);">Инф. о диске</div>
<div class="t " id="t60" style="left:502.8px;top:142.7px;transform:scaleX(0.9904);">Тип:</div>
<div class="t b" id="t61" style="left:542.5px;top:142.7px;transform:scaleX(0.9614);">DVD-R</div>
<div class="t " id="t62" style="left:502.8px;top:159.8px;transform:scaleX(0.9316);">ID:</div>
<div class="t b" id="t63" style="left:542.5px;top:159.8px;transform:scaleX(0.9840);">TYG02</div>
<div class="t " id="t64" style="left:502.8px;top:177.8px;transform:scaleX(1.0393);">Дата:</div>
<div class="t b" id="t65" style="left:542.5px;top:177.8px;transform:scaleX(1.1244);">n/a</div>
<div class="t " id="t66" style="left:502.8px;top:195.5px;transform:scaleX(0.9996);">Метка:</div>
<div class="a" style="left:542px;top:197px;width:69px;height:13px;background:#fff"></div>
<div class="a grp" style="left:491px;top:226px;width:140px;height:203px"></div>
<div class="a" style="left:498px;top:221px;width:60px;height:10px;background:#FAFAFA"></div>
<div class="t g" id="t67" style="left:500px;top:218.6px;transform:scaleX(1.0834);">Установки</div>
<div class="t " id="t68" style="left:500px;top:233.7px;transform:scaleX(0.9997);">Скорость</div>
<div class="a inp" style="left:500px;top:250px;width:84px;height:21px"></div>
<div class="t " id="t69" style="left:504.5px;top:253.4px;transform:scaleX(1.0293);">8 X</div>
<div class="a" style="left:567px;top:252px;width:15px;height:17px;border:1px solid #B7CAF5;border-radius:2px;background:linear-gradient(180deg,#D2DEFC 0,#C6D3F7 50%,#B9C9F4 100%)"><svg class="a" style="left:0px;top:0" width="13" height="15" viewBox="0 0 13 15"><path d="M3 5.2L6.5 8.7L10 5.2" stroke="#4D6185" stroke-width="2" fill="none"/></svg></div>
<div class="a" style="left:592px;top:248px;width:23px;height:23px;border:1px solid #404040;border-top-color:#fff;border-left-color:#fff;background:#ECE9D8;box-shadow:inset -1px -1px #ACA899"><svg width="21" height="21" viewBox="0 0 21 21"><rect x="3.6" y="2.6" width="12.8" height="14.8" fill="#fff" stroke="#000" stroke-width="1.5"/><path d="M7 9.5a3 3 0 0 1 5-1.8M13 10.5a3 3 0 0 1-5 1.8" stroke="#00A000" stroke-width="1.5" fill="none"/><path d="M11.2 5.2l2.6 2.4l-3.4 0.9zM8.8 14.8l-2.6-2.4l3.4-0.9z" fill="#00A000"/></svg></div>
<div class="t " id="t70" style="left:502px;top:280px;transform:scaleX(0.9802);">Старт</div>
<div class="a inp" style="left:554px;top:276px;width:60px;height:20px"></div>
<div class="t " id="t71" style="left:557px;top:278.2px;transform:scaleX(0.9743);">0000 MB</div>
<div class="t " id="t72" style="left:502px;top:302.6px;transform:scaleX(1.0151);">Конец</div>
<div class="a inp" style="left:554px;top:299px;width:60px;height:20px"></div>
<div class="t " id="t73" style="left:557px;top:300.9px;transform:scaleX(0.9743);">4060 MB</div>
<div class="a cb" style="left:502px;top:324px;border-color:#1C5180"></div>
<div class="t " id="t74" style="left:518px;top:324px;transform:scaleX(1.0208);">Быстр.скан.</div>
<div class="a cb" style="left:502px;top:345px;border-color:#1C5180"><svg width="11" height="11" viewBox="0 0 11 11"><path d="M2 5L4.5 7.5L9 2.5" stroke="#21A121" stroke-width="2" fill="none"/></svg></div>
<div class="t " id="t75" style="left:518px;top:344.6px;transform:scaleX(0.9826);">Отобр. C1/PIE</div>
<div class="a cb" style="left:502px;top:361px;border-color:#1C5180"><svg width="11" height="11" viewBox="0 0 11 11"><path d="M2 5L4.5 7.5L9 2.5" stroke="#21A121" stroke-width="2" fill="none"/></svg></div>
<div class="t " id="t76" style="left:518px;top:360.5px;transform:scaleX(0.9881);">Отобр. C2/PIF</div>
<div class="a cb" style="left:502px;top:378px;border-color:#1C5180"><svg width="11" height="11" viewBox="0 0 11 11"><path d="M2 5L4.5 7.5L9 2.5" stroke="#21A121" stroke-width="2" fill="none"/></svg></div>
<div class="t " id="t77" style="left:518px;top:377.7px;transform:scaleX(0.9602);">Отобр. Jitter</div>
<div class="a cb" style="left:502px;top:394px;border-color:#1C5180"><svg width="11" height="11" viewBox="0 0 11 11"><path d="M2 5L4.5 7.5L9 2.5" stroke="#21A121" stroke-width="2" fill="none"/></svg></div>
<div class="t " id="t78" style="left:518px;top:394px;transform:scaleX(0.9996);">Отобр. скор. чтения</div>
<div class="a cb" style="left:502px;top:410px;border-color:#CAC8BB"><svg width="11" height="11" viewBox="0 0 11 11"><path d="M2 5L4.5 7.5L9 2.5" stroke="#CAC8BB" stroke-width="2" fill="none"/></svg></div>
<div class="t d" id="t79" style="left:518px;top:409.9px;transform:scaleX(1.0146);">Отобр. скор. записи</div>
<div class="a grp" style="left:491px;top:435px;width:140px;height:27px"></div>
<div class="t " id="t80" style="left:502px;top:441.5px;transform:scaleX(1.0473);">Индекс</div>
<div class="t b" id="t81" style="left:608.1px;top:441.5px;transform:scaleX(1.0122);">97</div>
<div class="a grp" style="left:491px;top:467px;width:140px;height:57px"></div>
<div class="t " id="t82" style="left:502px;top:475.3px;transform:scaleX(0.9879);">Выполнено:</div>
<div class="t b" id="t83" style="left:591.5px;top:475.3px;transform:scaleX(0.9711);">100 %</div>
<div class="t " id="t84" style="left:502px;top:491.4px;transform:scaleX(0.9953);">Положение:</div>
<div class="t b" id="t85" style="left:578.2px;top:491.4px;transform:scaleX(0.9607);">4059 MB</div>
<div class="t " id="t86" style="left:502px;top:507px;transform:scaleX(0.9988);">Скорость:</div>
<div class="t b" id="t87" style="left:589.9px;top:507px;transform:scaleX(1.0185);">7.98 X</div>
<div class="a egr" style="left:14px;top:468px;width:146px;height:56px"></div>
<div class="a" style="left:22px;top:464px;width:55px;height:10px;background:#F5F4EF"></div>
<div class="a" style="left:24px;top:464px;width:9px;height:9px;background:#00FFFF;border:1px solid #000"></div>
<div class="t " id="t88" style="left:35px;top:460.5px;transform:scaleX(0.9330);">PI Errors</div>
<div class="t " id="t89" style="left:22px;top:476px;transform:scaleX(0.9637);">Среднее:</div>
<div class="t b" id="t90" style="left:129.5px;top:476px;transform:scaleX(1.0130);">3.25</div>
<div class="t " id="t91" style="left:22px;top:491.7px;transform:scaleX(1.0291);">Максим.:</div>
<div class="t b" id="t92" style="left:139px;top:491.7px;transform:scaleX(0.9631);">11</div>
<div class="t " id="t93" style="left:22px;top:506.6px;transform:scaleX(1.0379);">Итого:</div>
<div class="t b" id="t94" style="left:120.2px;top:506.6px;transform:scaleX(1.0133);">29076</div>
<div class="a egr" style="left:172px;top:468px;width:146px;height:56px"></div>
<div class="a" style="left:180px;top:464px;width:64px;height:10px;background:#F5F4EF"></div>
<div class="a" style="left:182px;top:464px;width:9px;height:9px;background:#FFFF00;border:1px solid #000"></div>
<div class="t " id="t95" style="left:193px;top:460.5px;transform:scaleX(0.9415);">PI Failures</div>
<div class="t " id="t96" style="left:180.5px;top:476px;transform:scaleX(0.9741);">Среднее:</div>
<div class="t b" id="t97" style="left:287.9px;top:476px;transform:scaleX(1.0317);">0.03</div>
<div class="t " id="t98" style="left:180.5px;top:491.7px;transform:scaleX(1.0400);">Максим.:</div>
<div class="t b" id="t99" style="left:303px;top:491.7px;transform:scaleX(1.1429);">6</div>
<div class="t " id="t100" style="left:180.5px;top:506.6px;transform:scaleX(1.0505);">Итого:</div>
<div class="t b" id="t101" style="left:291.2px;top:506.6px;transform:scaleX(0.9423);">251</div>
<div class="a egr" style="left:331px;top:468px;width:147px;height:42px"></div>
<div class="a" style="left:339px;top:464px;width:37px;height:10px;background:#F5F4EF"></div>
<div class="a" style="left:341px;top:464px;width:9px;height:9px;background:#FF00FF;border:1px solid #000"></div>
<div class="t " id="t102" style="left:352px;top:460.5px;transform:scaleX(0.9604);">Jitter</div>
<div class="t " id="t103" style="left:340.2px;top:476.3px;transform:scaleX(0.9490);">Среднее:</div>
<div class="t b" id="t104" style="left:435.7px;top:476.3px;transform:scaleX(0.9577);">9.23 %</div>
<div class="t " id="t105" style="left:340.2px;top:491.4px;transform:scaleX(1.0247);">Максим.:</div>
<div class="t b" id="t106" style="left:434.9px;top:491.4px;transform:scaleX(0.9810);">10.5 %</div>
<div class="t " id="t107" style="left:340.2px;top:510px;transform:scaleX(0.9337);">Сбои PO:</div>
<div class="t b" id="t108" style="left:462.7px;top:510px;transform:scaleX(0.9469);">0</div>
</body></html>
